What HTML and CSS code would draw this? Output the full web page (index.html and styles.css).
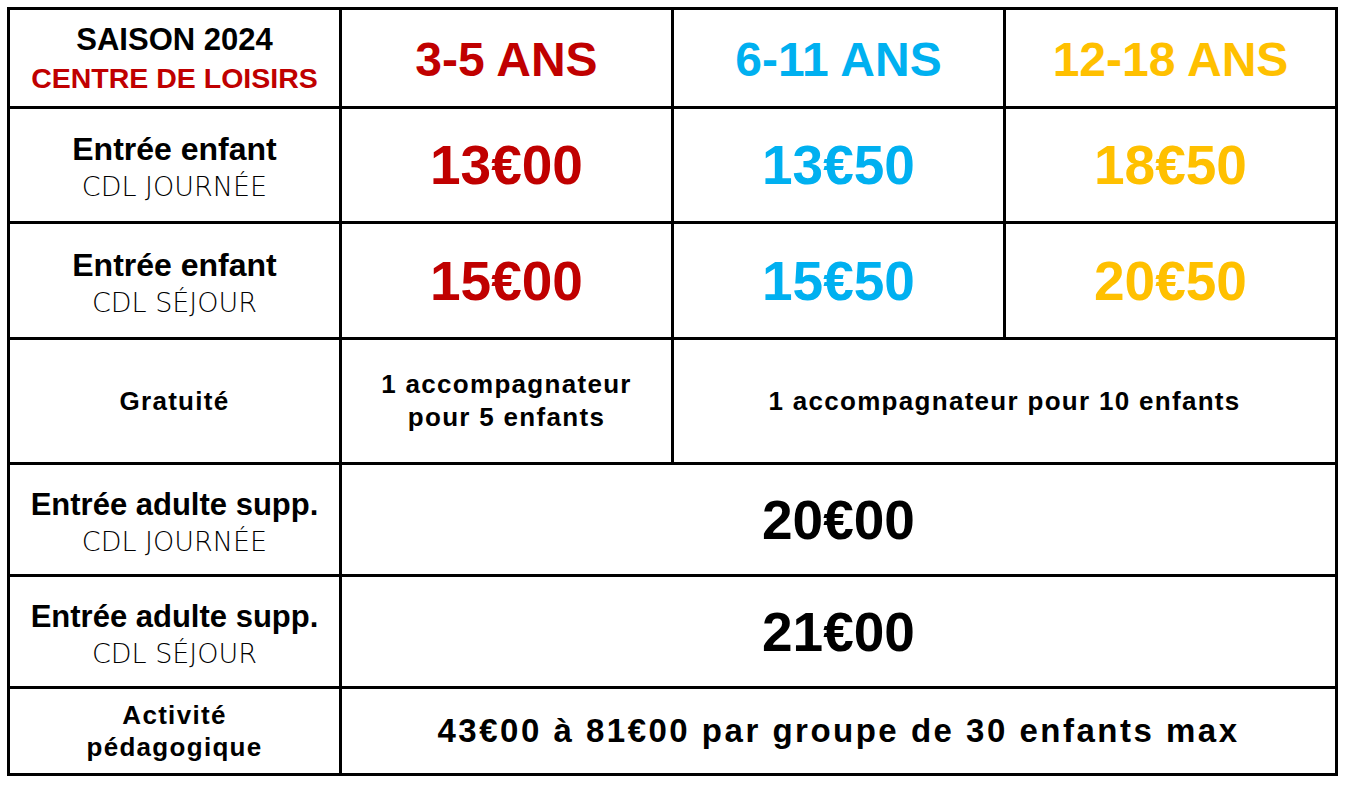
FILE: index.html
```html
<!DOCTYPE html>
<html lang="fr">
<head>
<meta charset="utf-8">
<title>Saison 2024 - Centre de loisirs</title>
<link rel="stylesheet" href="styles.css">
</head>
<body>
<div class="page">
  <div class="grid">
    <div class="cell head-title">
      <div class="season">SAISON 2024</div>
      <div class="centre">CENTRE DE LOISIRS</div>
    </div>
    <div class="cell age red">3-5 ANS</div>
    <div class="cell age blue">6-11 ANS</div>
    <div class="cell age yellow">12-18 ANS</div>

    <div class="cell label">
      <div class="lab-main">Entrée enfant</div>
      <div class="lab-sub">CDL JOURNÉE</div>
    </div>
    <div class="cell price red">13€00</div>
    <div class="cell price blue">13€50</div>
    <div class="cell price yellow">18€50</div>

    <div class="cell label">
      <div class="lab-main">Entrée enfant</div>
      <div class="lab-sub">CDL SÉJOUR</div>
    </div>
    <div class="cell price red">15€00</div>
    <div class="cell price blue">15€50</div>
    <div class="cell price yellow">20€50</div>

    <div class="cell">
      <div class="lab-small">Gratuité</div>
    </div>
    <div class="cell note">1 accompagnateur<br>pour 5 enfants</div>
    <div class="cell note span2">1 accompagnateur pour 10 enfants</div>

    <div class="cell label">
      <div class="lab-main lab-wide">Entrée adulte supp.</div>
      <div class="lab-sub">CDL JOURNÉE</div>
    </div>
    <div class="cell price black span3">20€00</div>

    <div class="cell label">
      <div class="lab-main lab-wide">Entrée adulte supp.</div>
      <div class="lab-sub">CDL SÉJOUR</div>
    </div>
    <div class="cell price black span3">21€00</div>

    <div class="cell">
      <div class="lab-small">Activité<br>pédagogique</div>
    </div>
    <div class="cell activity span3">43€00 à 81€00 par groupe de 30 enfants max</div>
  </div>
</div>
</body>
</html>
```

FILE: styles.css
```css
html, body {
  margin: 0;
  padding: 0;
  background: #ffffff;
}

body {
  font-family: "Liberation Sans", Arial, sans-serif;
  color: #000000;
}

.page {
  padding: 7px;
}

.grid {
  display: grid;
  width: 1331px;
  box-sizing: border-box;
  grid-template-columns: 329px 329px 329px 329px;
  grid-template-rows: 96px 112px 113px 122px 109px 109px 84px;
  gap: 3px;
  padding: 3px;
  background: #000000;
}

.cell {
  background: #ffffff;
  display: flex;
  flex-direction: column;
  align-items: center;
  justify-content: center;
  text-align: center;
  white-space: nowrap;
}

.span2 { grid-column: span 2; }
.span3 { grid-column: span 3; }

.red { color: #c00000; }
.blue { color: #00b0f0; }
.yellow { color: #ffc000; }
.black { color: #000000; }

.head-title {
  padding-top: 2px;
}

.season {
  font-weight: bold;
  font-size: 31px;
  line-height: 38px;
}

.centre {
  font-weight: bold;
  font-size: 28.5px;
  line-height: 38px;
  color: #c00000;
}

.age {
  font-weight: bold;
  font-size: 48px;
  padding-top: 2px;
}

.price {
  font-weight: bold;
  font-size: 55px;
}

.label {
  padding-top: 6px;
}

.lab-main {
  font-weight: bold;
  font-size: 32px;
  line-height: 37px;
}

.lab-wide {
  font-size: 31px;
}

.lab-sub {
  font-family: "DejaVu Sans", "Liberation Sans", sans-serif;
  font-size: 27px;
  line-height: 37px;
  font-weight: 300;
}

.lab-small {
  font-weight: bold;
  font-size: 26px;
  line-height: 32px;
  letter-spacing: 1.3px;
}

.note {
  font-weight: bold;
  font-size: 26px;
  line-height: 33px;
  letter-spacing: 1.3px;
}

.activity {
  font-weight: bold;
  font-size: 33px;
  letter-spacing: 2.5px;
}
```
